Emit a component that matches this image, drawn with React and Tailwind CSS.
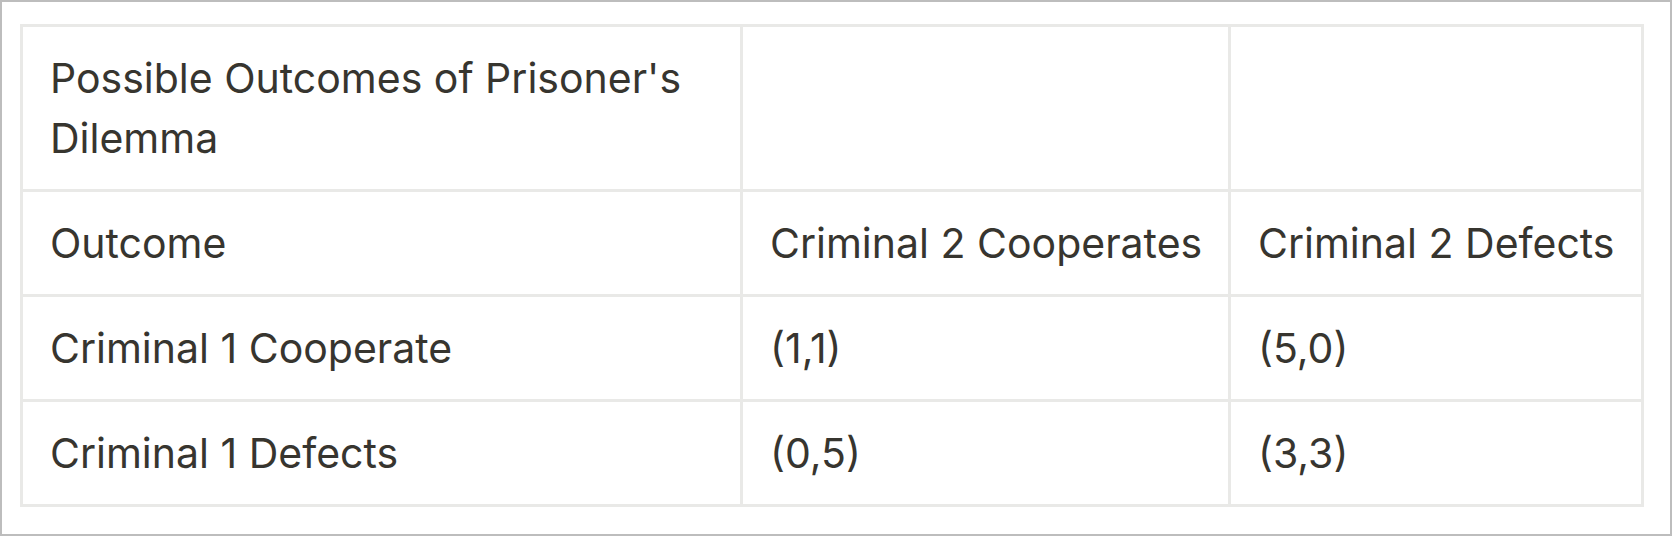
export default function App() {
  const cell = "bg-white pl-[27px] pr-[4px] py-[21px] text-[41px] leading-[60px] text-[#37352f] whitespace-nowrap";
  const rows = [
    ["Possible Outcomes of Prisoner's Dilemma", "", ""],
    ["Outcome", "Criminal 2 Cooperates", "Criminal 2 Defects"],
    ["Criminal 1 Cooperate", "(1,1)", "(5,0)"],
    ["Criminal 1 Defects", "(0,5)", "(3,3)"],
  ];
  return (
    <div className="w-[1672px] h-[536px] border-2 border-[#bdbdbd] bg-white pl-[18px] pt-[22px]" style={{ fontFamily: "Inter, 'Noto Sans', sans-serif" }}>
      <div className="grid w-fit grid-cols-[717px_485px_410px] gap-[3px] bg-[#e9e9e7] p-[3px]">
        {rows.map((r, i) =>
          r.map((c, j) => (
            <div key={i + "-" + j} className={cell + (i === 0 ? " h-[162px]" : " h-[102px]")}>
              {i === 0 && j === 0 ? (
                <>Possible Outcomes of Prisoner's<br />Dilemma</>
              ) : (
                c
              )}
            </div>
          ))
        )}
      </div>
    </div>
  );
}
